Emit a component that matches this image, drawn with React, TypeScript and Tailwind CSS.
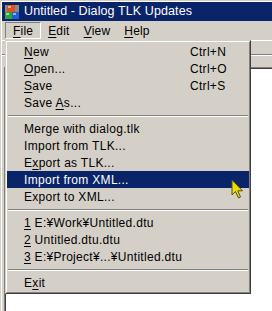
import React from "react";

type Item =
  | { kind: "item"; pre?: string; u?: string; post?: string; shortcut?: string; active?: boolean }
  | { kind: "sep" };

const items: Item[] = [
  { kind: "item", u: "N", post: "ew", shortcut: "Ctrl+N" },
  { kind: "item", u: "O", post: "pen...", shortcut: "Ctrl+O" },
  { kind: "item", u: "S", post: "ave", shortcut: "Ctrl+S" },
  { kind: "item", pre: "Save ", u: "A", post: "s..." },
  { kind: "sep" },
  { kind: "item", pre: "Merge with dialog.tlk" },
  { kind: "item", pre: "Import from TLK..." },
  { kind: "item", pre: "E", u: "x", post: "port as TLK..." },
  { kind: "item", pre: "Import from XML...", active: true },
  { kind: "item", pre: "Export to XML..." },
  { kind: "sep" },
  { kind: "item", u: "1", post: " E:¥Work¥Untitled.dtu" },
  { kind: "item", u: "2", post: " Untitled.dtu.dtu" },
  { kind: "item", u: "3", post: " E:¥Project¥...¥Untitled.dtu" },
  { kind: "sep" },
  { kind: "item", pre: "E", u: "x", post: "it" },
];

function AppIcon() {
  return (
    <svg width="16" height="16" viewBox="0 0 16 16">
      <rect x="1" y="1" width="14" height="14" fill="#8a8a8a" />
      <rect x="3" y="1" width="8" height="7" fill="#e05020" />
      <rect x="4" y="2" width="3" height="2" fill="#f8b070" />
      <rect x="1" y="8" width="7" height="7" fill="#30a040" />
      <rect x="2" y="9" width="3" height="2" fill="#90e090" />
      <rect x="8" y="8" width="7" height="7" fill="#2060d0" />
      <rect x="9" y="9" width="3" height="2" fill="#90b8f8" />
    </svg>
  );
}

function Cursor() {
  return (
    <svg width="14" height="20" viewBox="0 0 14 20">
      <path
        d="M1 1 L1 16 L4.5 12.5 L7.5 19 L9.5 18 L6.8 11.8 L11.5 11.8 Z"
        fill="#e8dc10"
        stroke="#5a5200"
        strokeWidth="1"
        strokeLinejoin="miter"
      />
    </svg>
  );
}

export default function App() {
  return (
    <div className="relative w-[272px] h-[311px] overflow-hidden bg-[#d4d0c8] text-black font-['Liberation_Sans',Arial,sans-serif] text-[12px] leading-none">
      <div className="flex flex-col h-full border-t border-l border-t-[#d4d0c8] border-l-[#d4d0c8]">
        <div className="flex flex-col h-full border-t border-l border-t-white border-l-white">
          {/* Title bar */}
          <div className="h-[19px] bg-[#0a246a] flex items-center pl-[2px] gap-[4px]">
            <AppIcon />
            <span className="text-white text-[12.5px] tracking-[0.1px]">Untitled - Dialog TLK Updates</span>
          </div>
          {/* Menu bar */}
          <div className="h-[19px] flex items-center pl-[3px] tracking-[0.2px]">
            <div className="h-[17px] flex items-center px-[7px] border border-t-[#808080] border-l-[#808080] border-r-white border-b-white">
              <span><span className="underline underline-offset-2">F</span>ile</span>
            </div>
            <div className="px-[7px]"><span className="underline underline-offset-2">E</span>dit</div>
            <div className="px-[7px]"><span className="underline underline-offset-2">V</span>iew</div>
            <div className="px-[7px]"><span className="underline underline-offset-2">H</span>elp</div>
          </div>
          {/* Client area */}
          <div className="flex-1 flex flex-col">
            <div className="h-[14px] border-t border-t-white" />
            <div className="h-[2px] border-t border-b border-t-[#808080] border-b-white" />
            <div className="h-[11px]" />
            <div className="flex-1 ml-[2px] border-t border-l border-t-[#808080] border-l-[#808080]">
              <div className="h-full border-t border-l border-t-[#404040] border-l-[#404040] bg-white" />
            </div>
          </div>
        </div>
      </div>

      {/* Dropdown menu */}
      <div className="absolute left-[5px] top-[40px] w-[246px] border border-t-[#d4d0c8] border-l-[#d4d0c8] border-r-[#404040] border-b-[#404040] bg-[#d4d0c8]">
        <div className="border border-t-white border-l-white border-r-[#808080] border-b-[#808080] py-[1px]">
          {items.map((it, i) =>
            it.kind === "sep" ? (
              <div key={i} className="h-[9px] pt-[4px] px-[1px]">
                <div className="h-[2px] border-t border-b border-t-[#808080] border-b-white" />
              </div>
            ) : (
              <div
                key={i}
                className={
                  "h-[17px] flex items-center pl-[17px] whitespace-pre tracking-[0.3px] " +
                  (it.active ? "bg-[#0a246a] text-white" : "")
                }
              >
                <span className="w-[166px] shrink-0">
                  {it.pre}
                  {it.u ? <span className="underline underline-offset-2">{it.u}</span> : null}
                  {it.post}
                </span>
                {it.shortcut ? <span>{it.shortcut}</span> : null}
              </div>
            )
          )}
        </div>
      </div>

      {/* Mouse cursor */}
      <div className="absolute left-[231px] top-[179px]">
        <Cursor />
      </div>
    </div>
  );
}
